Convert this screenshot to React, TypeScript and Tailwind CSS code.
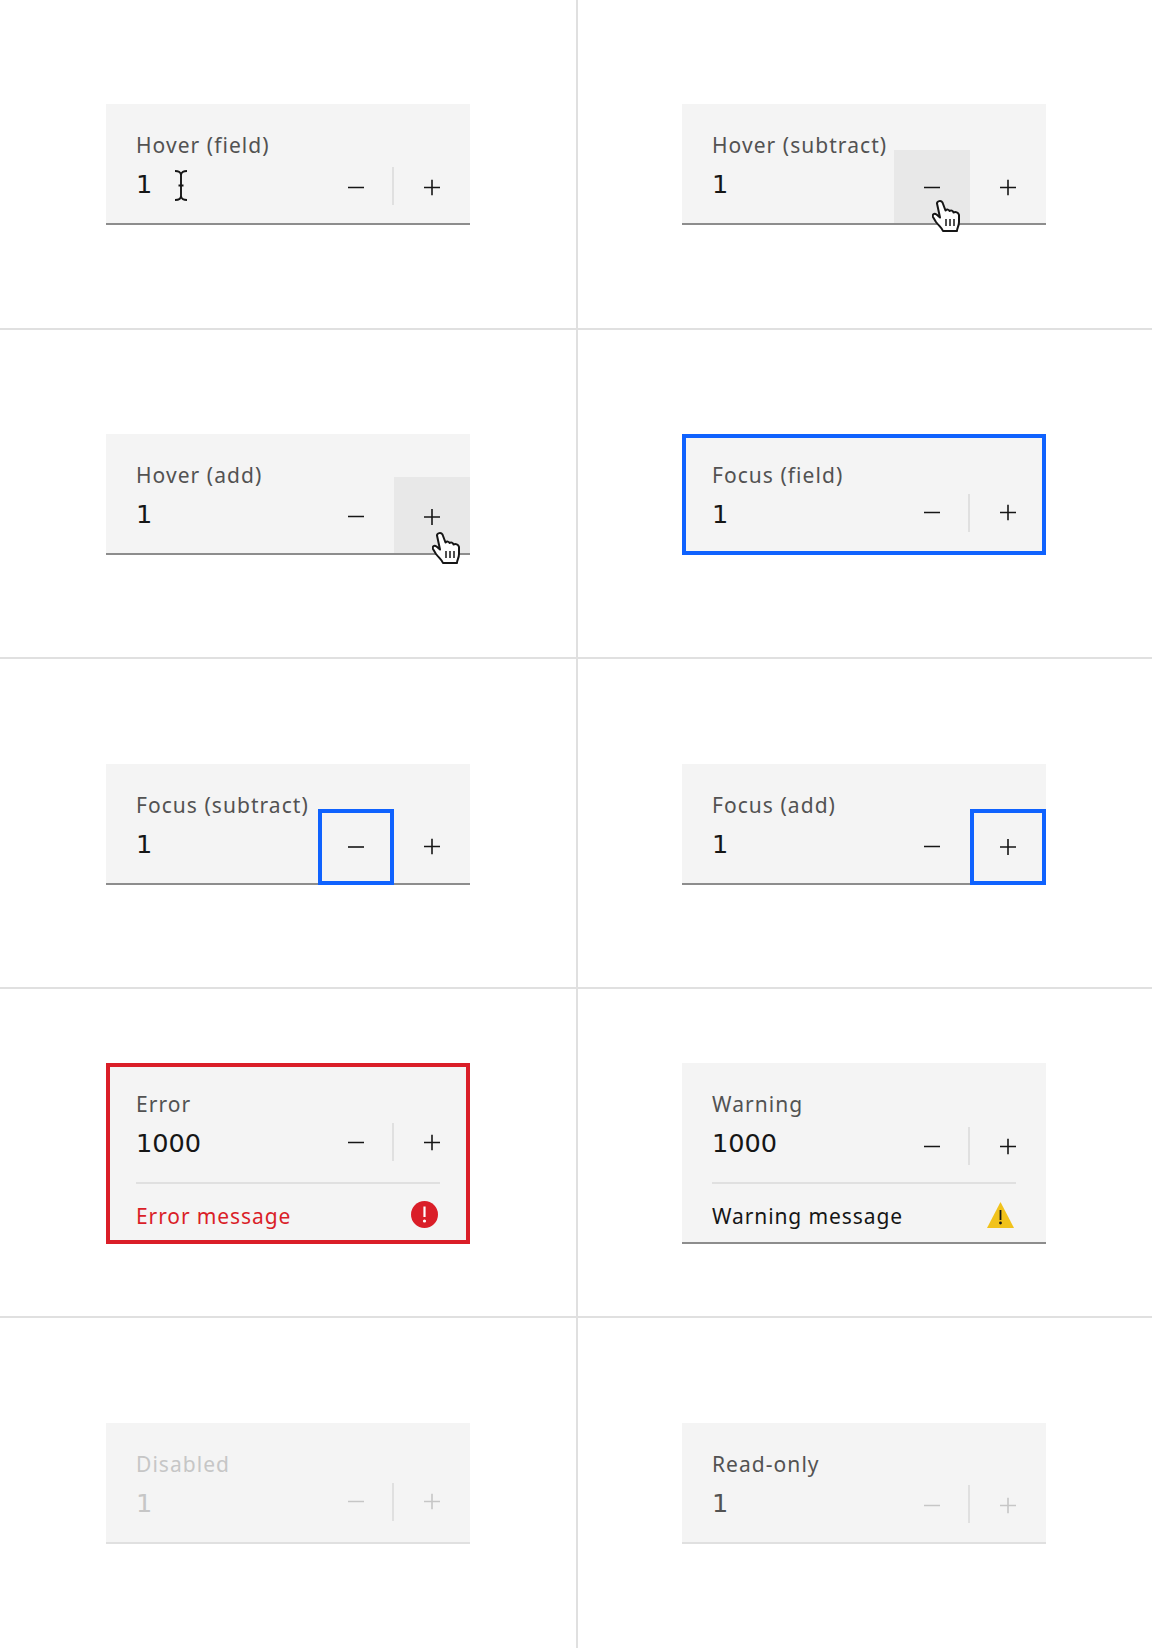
import React from "react";

const sans = "font-['Noto_Sans','Open_Sans',sans-serif]";

function Minus({ color = "#161616" }: { color?: string }) {
  return (
    <svg width="16" height="16" viewBox="0 0 16 16" fill="none">
      <path d="M0 8H16" stroke={color} strokeWidth="1.6" />
    </svg>
  );
}

function Plus({ color = "#161616" }: { color?: string }) {
  return (
    <svg width="16" height="16" viewBox="0 0 16 16" fill="none">
      <path d="M0 8H16M8 0V16" stroke={color} strokeWidth="1.6" />
    </svg>
  );
}

function Hand({ className }: { className: string }) {
  return (
    <svg className={className} width="28" height="32" viewBox="0 0 28 32" fill="none">
      <path
        d="M5 3.5C5 1 9 0 10.5 2.5L13.5 10.5C15 9 17 9.5 17.5 11C19 10 21 10.5 21.5 12.5C23.5 11.5 26.5 12.5 27 15L27 22C27 26 25 28 25 31L11 31C10 28 7 26 4 22L1 17C0 15 2 12.5 4.5 14.5L8 17.5Z"
        fill="#fff"
        stroke="#161616"
        strokeWidth="2"
        strokeLinejoin="round"
      />
      <path d="M14 19V26M18 19V26M22 19V26" stroke="#161616" strokeWidth="1.5" />
    </svg>
  );
}

function Beam({ className }: { className: string }) {
  return (
    <svg className={className} width="14" height="31" viewBox="0 0 14 31" fill="none">
      <path
        d="M1 1C4 1 7 2 7 5V26C7 29 4 30 1 30M13 1C10 1 7 2 7 5M13 30C10 30 7 29 7 26M4.5 15.5H9.5"
        stroke="#161616"
        strokeWidth="1.9"
      />
    </svg>
  );
}

function ErrorIcon() {
  return (
    <svg width="27" height="27" viewBox="0 0 27 27">
      <circle cx="13.5" cy="13.5" r="13.5" fill="#da1e28" />
      <path d="M12.4 5.5H14.6V16H12.4Z" fill="#fff" />
      <circle cx="13.5" cy="20" r="1.6" fill="#fff" />
    </svg>
  );
}

function WarnIcon() {
  return (
    <svg width="27" height="26" viewBox="0 0 27 26">
      <path d="M13.5 0L27 26H0Z" fill="#f1c21b" />
      <path d="M12.6 8H14.4V18H12.6Z" fill="#161616" />
      <circle cx="13.5" cy="21" r="1.4" fill="#161616" />
    </svg>
  );
}

type FieldProps = {
  label: string;
  value?: string;
  shell?: string;
  labelColor?: string;
  valueColor?: string;
  iconColor?: string;
  minusClass?: string;
  plusClass?: string;
  minusIcon?: string;
  plusIcon?: string;
  dividerClass?: string;
  overlay?: React.ReactNode;
  message?: React.ReactNode;
};

function Field({
  label,
  value = "1",
  shell = "shadow-[inset_0_-2px_0_#8d8d8d]",
  labelColor = "text-[#525252]",
  valueColor = "text-[#161616]",
  iconColor,
  minusClass = "h-[73px]",
  plusClass = "h-[73px]",
  minusIcon = "translate-y-[0.5px]",
  plusIcon = "translate-y-[0.5px]",
  dividerClass,
  overlay,
  message,
}: FieldProps) {
  return (
    <div className={`relative w-[364px] bg-[#f4f4f4] ${message ? "" : "pb-[2px]"} ${shell}`}>
      <div className="flex h-[119px]">
        <div className="min-w-0 flex-1 pl-[30px] pt-[26px]">
          <div className={`${sans} whitespace-nowrap text-[21px] leading-[30px] tracking-[1.05px] ${labelColor}`}>{label}</div>
          <div className={`font-['DejaVu_Sans',sans-serif] mt-[2px] text-[25.6px] leading-[44px] ${valueColor}`}>{value}</div>
        </div>
        <div className="flex w-[152px] flex-none items-end">
          <div className={`flex w-[76px] flex-none items-center justify-center ${minusClass}`}>
            <span className={`flex ${minusIcon}`}>
              <Minus color={iconColor} />
            </span>
          </div>
          {dividerClass ? <div className={`-ml-[2px] h-[38px] w-[2px] flex-none self-start bg-[#e0e0e0] ${dividerClass}`} /> : null}
          <div className={`flex w-[76px] flex-none items-center justify-center ${plusClass}`}>
            <span className={`flex ${plusIcon}`}>
              <Plus color={iconColor} />
            </span>
          </div>
        </div>
      </div>
      {message}
      {overlay}
    </div>
  );
}

function Message({ text, color, icon }: { text: string; color: string; icon: React.ReactNode }) {
  return (
    <div className="mx-[30px] flex h-[62px] items-center justify-between border-t-2 border-[#e0e0e0] pr-[2px] pt-[1px]">
      <span className={`${sans} pt-[2px] text-[21px] leading-[30px] tracking-[0.9px] ${color}`}>{text}</span>
      {icon}
    </div>
  );
}

function Cell({ children, left, last }: { children: React.ReactNode; left?: boolean; last?: boolean }) {
  return (
    <div
      className={`flex items-center justify-center border-[#e0e0e0] ${left ? "border-r-2" : "pr-[2px]"} ${last ? "" : "border-b-2 pt-[2.2px]"}`}
    >
      {children}
    </div>
  );
}

export default function App() {
  const focusBox = "h-[76px] -mb-[2px] border-4 border-[#0f62fe]";
  const up = "-translate-y-[3.5px]";
  const down = "translate-y-[2px]";
  return (
    <div className="grid h-[1648px] w-[1152px] grid-cols-[578px_574px] grid-rows-5 bg-white">
      <Cell left>
        <Field
          label="Hover (field)"
          dividerClass="mt-[63px]"
          overlay={<Beam className="absolute left-[68px] top-[66px]" />}
        />
      </Cell>
      <Cell>
        <Field
          label="Hover (subtract)"
          minusClass="h-[73px] bg-[#e8e8e8]"
          overlay={<Hand className="absolute left-[250px] top-[96px]" />}
        />
      </Cell>

      <Cell left>
        <Field
          label="Hover (add)"
          plusClass="h-[76px] bg-[#e8e8e8]"
          plusIcon={down}
          overlay={<Hand className="absolute left-[326px] top-[98px]" />}
        />
      </Cell>
      <Cell>
        <Field
          label="Focus (field)"
          shell="shadow-[inset_0_0_0_4px_#0f62fe]"
          dividerClass="mt-[60px]"
          minusIcon={up}
          plusIcon={up}
        />
      </Cell>

      <Cell left>
        <Field label="Focus (subtract)" minusClass={focusBox} minusIcon="" />
      </Cell>
      <Cell>
        <Field label="Focus (add)" plusClass={focusBox} plusIcon="" />
      </Cell>

      <Cell left>
        <Field
          label="Error"
          value="1000"
          shell="shadow-[inset_0_0_0_4px_#da1e28]"
          dividerClass="mt-[60px]"
          minusIcon={up}
          plusIcon={up}
          message={<Message text="Error message" color="text-[#da1e28]" icon={<ErrorIcon />} />}
        />
      </Cell>
      <Cell>
        <Field
          label="Warning"
          value="1000"
          dividerClass="mt-[64px]"
          message={<Message text="Warning message" color="text-[#161616]" icon={<WarnIcon />} />}
        />
      </Cell>

      <Cell left last>
        <Field
          label="Disabled"
          shell="shadow-[inset_0_-2px_0_#e0e0e0]"
          labelColor="text-[#c6c6c6]"
          valueColor="text-[#c6c6c6]"
          iconColor="#c6c6c6"
          dividerClass="mt-[60px]"
          minusIcon={up}
          plusIcon={up}
        />
      </Cell>
      <Cell last>
        <Field
          label="Read-only"
          shell="shadow-[inset_0_-2px_0_#e0e0e0]"
          valueColor="text-[#525252]"
          iconColor="#c6c6c6"
          dividerClass="mt-[62px]"
        />
      </Cell>
    </div>
  );
}
